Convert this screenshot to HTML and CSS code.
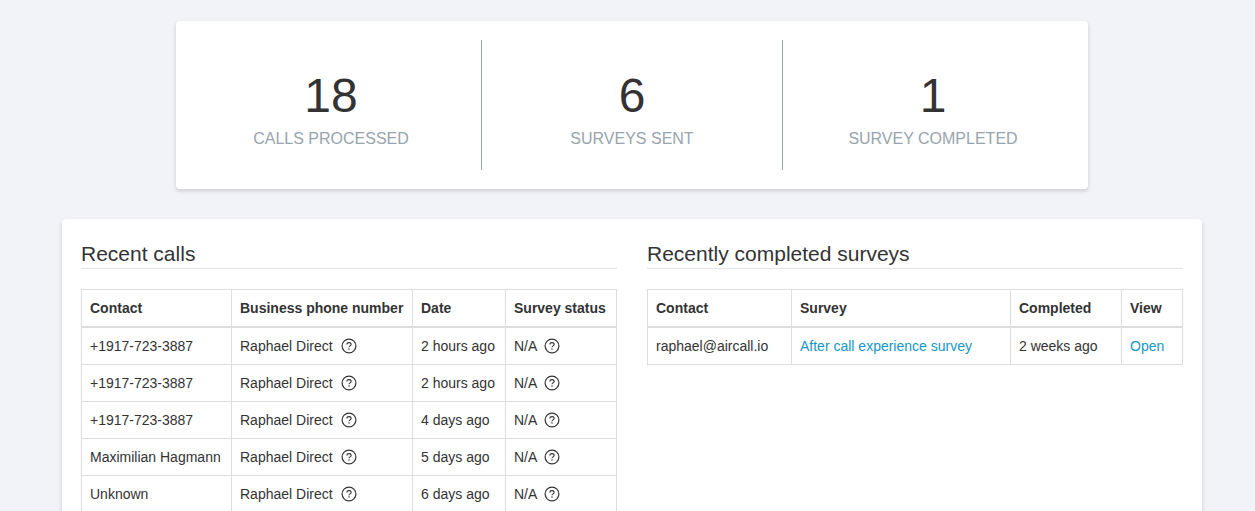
FILE: index.html
```html
<!DOCTYPE html>
<html lang="en">
<head>
  <meta charset="UTF-8">
  <meta name="viewport" content="width=device-width, initial-scale=1.0">
  <title>Survey Dashboard</title>
  <link rel="stylesheet" href="styles.css">
</head>
<body>
  <svg class="sprite" aria-hidden="true">
    <symbol id="help" viewBox="0 0 16 16">
      <circle cx="8" cy="8" r="6.9" fill="none" stroke="currentColor" stroke-width="1.2"/>
      <path d="M5.9 6.5C5.9 5.3 6.8 4.6 8 4.6s2.1.7 2.1 1.8c0 1.5-2.1 1.5-2.1 2.9" fill="none" stroke="currentColor" stroke-width="1.1"/>
      <circle cx="8" cy="11.1" r="0.75" fill="currentColor"/>
    </symbol>
  </svg>

  <main class="page">
    <section class="card stats">
      <div class="stat">
        <div class="stat-value">18</div>
        <div class="stat-label">CALLS PROCESSED</div>
      </div>
      <div class="stat">
        <div class="stat-value">6</div>
        <div class="stat-label">SURVEYS SENT</div>
      </div>
      <div class="stat">
        <div class="stat-value">1</div>
        <div class="stat-label">SURVEY COMPLETED</div>
      </div>
    </section>

    <section class="card panels">
      <div class="panel">
        <h2>Recent calls</h2>
        <table>
          <colgroup>
            <col class="call-contact">
            <col class="call-number">
            <col class="call-date">
            <col class="call-status">
          </colgroup>
          <thead>
            <tr><th>Contact</th><th>Business phone number</th><th>Date</th><th>Survey status</th></tr>
          </thead>
          <tbody>
            <tr>
              <td>+1917-723-3887</td>
              <td>Raphael Direct <svg class="help"><use href="#help"/></svg></td>
              <td>2 hours ago</td>
              <td>N/A <svg class="help"><use href="#help"/></svg></td>
            </tr>
            <tr>
              <td>+1917-723-3887</td>
              <td>Raphael Direct <svg class="help"><use href="#help"/></svg></td>
              <td>2 hours ago</td>
              <td>N/A <svg class="help"><use href="#help"/></svg></td>
            </tr>
            <tr>
              <td>+1917-723-3887</td>
              <td>Raphael Direct <svg class="help"><use href="#help"/></svg></td>
              <td>4 days ago</td>
              <td>N/A <svg class="help"><use href="#help"/></svg></td>
            </tr>
            <tr>
              <td>Maximilian Hagmann</td>
              <td>Raphael Direct <svg class="help"><use href="#help"/></svg></td>
              <td>5 days ago</td>
              <td>N/A <svg class="help"><use href="#help"/></svg></td>
            </tr>
            <tr>
              <td>Unknown</td>
              <td>Raphael Direct <svg class="help"><use href="#help"/></svg></td>
              <td>6 days ago</td>
              <td>N/A <svg class="help"><use href="#help"/></svg></td>
            </tr>
          </tbody>
        </table>
      </div>

      <div class="panel">
        <h2>Recently completed surveys</h2>
        <table>
          <colgroup>
            <col class="survey-contact">
            <col class="survey-name">
            <col class="survey-date">
            <col class="survey-view">
          </colgroup>
          <thead>
            <tr><th>Contact</th><th>Survey</th><th>Completed</th><th>View</th></tr>
          </thead>
          <tbody>
            <tr>
              <td>raphael@aircall.io</td>
              <td><a href="#">After call experience survey</a></td>
              <td>2 weeks ago</td>
              <td><a href="#">Open</a></td>
            </tr>
          </tbody>
        </table>
      </div>
    </section>
  </main>
</body>
</html>
```
FILE: styles.css
```css
* {
  box-sizing: border-box;
}
body {
  margin: 0;
  background-color: #f2f3f8;
  color: #333;
  font-family: "Liberation Sans", Arial, sans-serif;
  font-size: 14px;
  line-height: 20px;
}
.sprite {
  display: none;
}
.page {
  padding: 21px 53px 20px 62px;
}
.card {
  background: #fff;
  border-radius: 4px;
  box-shadow: 0 2px 4px rgba(0, 0, 0, 0.16);
}
.stats {
  display: flex;
  width: 80%;
  margin: 0 auto 30px;
  padding: 19px 5px;
}
.stat {
  flex: 1;
  padding: 28px 0 20px;
  text-align: center;
}
.stat + .stat {
  border-left: 1px solid #98a4ae;
}
.stat-value {
  font-size: 48px;
  line-height: 56px;
}
.stat-label {
  margin-top: 4px;
  color: #98a4ae;
  font-size: 16px;
  line-height: 22px;
}
.panels {
  display: flex;
  gap: 30px;
  padding: 20px 19px;
}
.panel {
  flex: 1;
  min-width: 0;
}
h2 {
  margin: 0 0 20px;
  border-bottom: 1px solid #e5e5e5;
  font-size: 21px;
  font-weight: normal;
  line-height: 29px;
}
table {
  width: 100%;
  table-layout: fixed;
  border-collapse: collapse;
}
th,
td {
  padding: 8px;
  border: 1px solid #ddd;
  text-align: left;
  white-space: nowrap;
}
th {
  border-bottom-width: 2px;
}
/* the number and survey name columns take the space that is left */
.call-contact {
  width: 150px;
}
.call-date {
  width: 93px;
}
.call-status {
  width: 111px;
}
.survey-contact {
  width: 144px;
}
.survey-date {
  width: 111px;
}
.survey-view {
  width: 61px;
}
.help {
  width: 16px;
  height: 16px;
  margin-left: 4px;
  vertical-align: -3px;
}
a {
  color: #1597c6;
  text-decoration: none;
}
a:hover {
  text-decoration: underline;
}
```
